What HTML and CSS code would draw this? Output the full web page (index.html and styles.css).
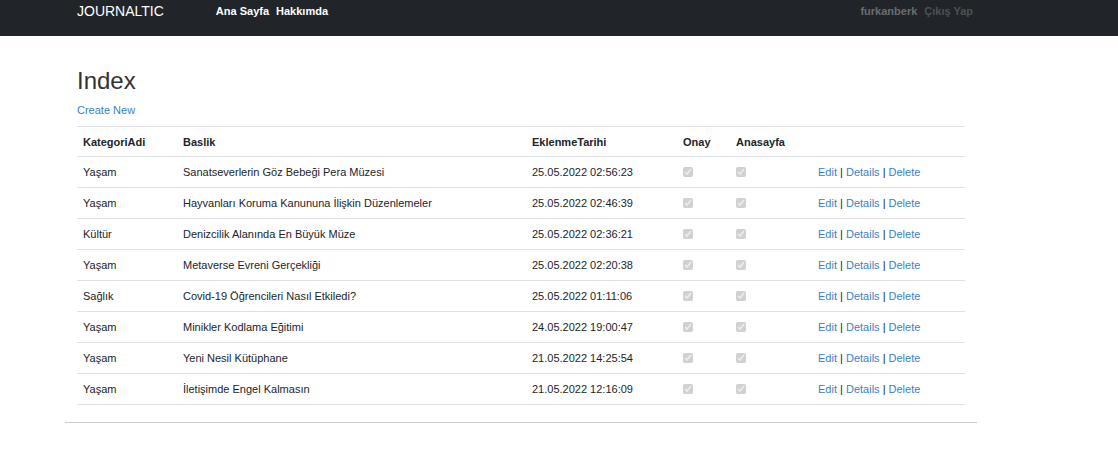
FILE: index.html
```html
<!DOCTYPE html>
<html lang="tr">
<head>
<meta charset="utf-8">
<meta name="viewport" content="width=device-width, initial-scale=1">
<title>Index - Journaltic</title>
<link rel="stylesheet" href="styles.css">
</head>
<body>
<nav class="navbar">
  <div class="container navbar-inner">
    <a class="brand" href="#">JOURNALTIC</a>
    <div class="nav-links"><a href="#">Ana Sayfa</a><a href="#">Hakkımda</a></div>
    <div class="nav-user"><a class="user-name" href="#">furkanberk</a><a href="#">Çıkış Yap</a></div>
  </div>
</nav>
<main class="container content">
  <h1 class="title">Index</h1>
  <p class="create"><a href="#">Create New</a></p>
  <table class="table">
    <colgroup><col class="c-cat"><col class="c-title"><col class="c-date"><col class="c-ok"><col class="c-home"><col></colgroup>
    <thead><tr><th>KategoriAdi</th><th>Baslik</th><th>EklenmeTarihi</th><th>Onay</th><th>Anasayfa</th><th></th></tr></thead>
    <tbody>
      <tr><td>Yaşam</td><td>Sanatseverlerin Göz Bebeği Pera Müzesi</td><td>25.05.2022 02:56:23</td><td><input class="check" type="checkbox" aria-label="Onay" checked disabled></td><td><input class="check" type="checkbox" aria-label="Anasayfa" checked disabled></td><td><a href="#">Edit</a> | <a href="#">Details</a> | <a href="#">Delete</a></td></tr>
      <tr><td>Yaşam</td><td>Hayvanları Koruma Kanununa İlişkin Düzenlemeler</td><td>25.05.2022 02:46:39</td><td><input class="check" type="checkbox" aria-label="Onay" checked disabled></td><td><input class="check" type="checkbox" aria-label="Anasayfa" checked disabled></td><td><a href="#">Edit</a> | <a href="#">Details</a> | <a href="#">Delete</a></td></tr>
      <tr><td>Kültür</td><td>Denizcilik Alanında En Büyük Müze</td><td>25.05.2022 02:36:21</td><td><input class="check" type="checkbox" aria-label="Onay" checked disabled></td><td><input class="check" type="checkbox" aria-label="Anasayfa" checked disabled></td><td><a href="#">Edit</a> | <a href="#">Details</a> | <a href="#">Delete</a></td></tr>
      <tr><td>Yaşam</td><td>Metaverse Evreni Gerçekliği</td><td>25.05.2022 02:20:38</td><td><input class="check" type="checkbox" aria-label="Onay" checked disabled></td><td><input class="check" type="checkbox" aria-label="Anasayfa" checked disabled></td><td><a href="#">Edit</a> | <a href="#">Details</a> | <a href="#">Delete</a></td></tr>
      <tr><td>Sağlık</td><td>Covid-19 Öğrencileri Nasıl Etkiledi?</td><td>25.05.2022 01:11:06</td><td><input class="check" type="checkbox" aria-label="Onay" checked disabled></td><td><input class="check" type="checkbox" aria-label="Anasayfa" checked disabled></td><td><a href="#">Edit</a> | <a href="#">Details</a> | <a href="#">Delete</a></td></tr>
      <tr><td>Yaşam</td><td>Minikler Kodlama Eğitimi</td><td>24.05.2022 19:00:47</td><td><input class="check" type="checkbox" aria-label="Onay" checked disabled></td><td><input class="check" type="checkbox" aria-label="Anasayfa" checked disabled></td><td><a href="#">Edit</a> | <a href="#">Details</a> | <a href="#">Delete</a></td></tr>
      <tr><td>Yaşam</td><td>Yeni Nesil Kütüphane</td><td>21.05.2022 14:25:54</td><td><input class="check" type="checkbox" aria-label="Onay" checked disabled></td><td><input class="check" type="checkbox" aria-label="Anasayfa" checked disabled></td><td><a href="#">Edit</a> | <a href="#">Details</a> | <a href="#">Delete</a></td></tr>
      <tr><td>Yaşam</td><td>İletişimde Engel Kalmasın</td><td>21.05.2022 12:16:09</td><td><input class="check" type="checkbox" aria-label="Onay" checked disabled></td><td><input class="check" type="checkbox" aria-label="Anasayfa" checked disabled></td><td><a href="#">Edit</a> | <a href="#">Details</a> | <a href="#">Delete</a></td></tr>
    </tbody>
  </table>
</main>
</body>
</html>
```
FILE: styles.css
```css
* { box-sizing: border-box; }
body { margin: 0; background: #fff; color: #212529; font: 11px/18px "Liberation Sans", Arial, sans-serif; }
a { color: #3a82c4; text-decoration: none; }
.container { max-width: 912px; margin-left: 65px; padding: 0 12px; }
.navbar { background: #212529; }
.navbar-inner { display: flex; align-items: center; padding-bottom: 13px; line-height: 23px; }
.navbar a { color: #fff; font-weight: bold; }
.navbar .brand { font-size: 14px; font-weight: normal; }
.nav-links { display: flex; gap: 7px; margin-left: 52px; }
.nav-user { display: flex; gap: 7px; margin-left: auto; margin-right: -8px; }
.navbar .nav-user a { color: #4d5154; }
.navbar .nav-user .user-name { color: #6a6d70; }
.content { padding-bottom: 17px; border-bottom: 1px solid #ccc; }
.title { margin: 0; padding-top: 32px; color: #333; font-size: 24px; line-height: 26px; font-weight: normal; }
.create { margin: 7px 0; }
.table { width: 100%; table-layout: fixed; border-collapse: collapse; border-top: 1px solid #dee2e6; }
.table th, .table td { height: 31px; padding: 0 6px; text-align: left; vertical-align: middle; border-bottom: 1px solid #dee2e6; }
.table th { height: 30px; }
.c-cat { width: 100px; }
.c-title { width: 349px; }
.c-date { width: 151px; }
.c-ok { width: 53px; }
.c-home { width: 82px; }
.check { display: block; width: 10px; height: 10px; margin: 0; }
```
